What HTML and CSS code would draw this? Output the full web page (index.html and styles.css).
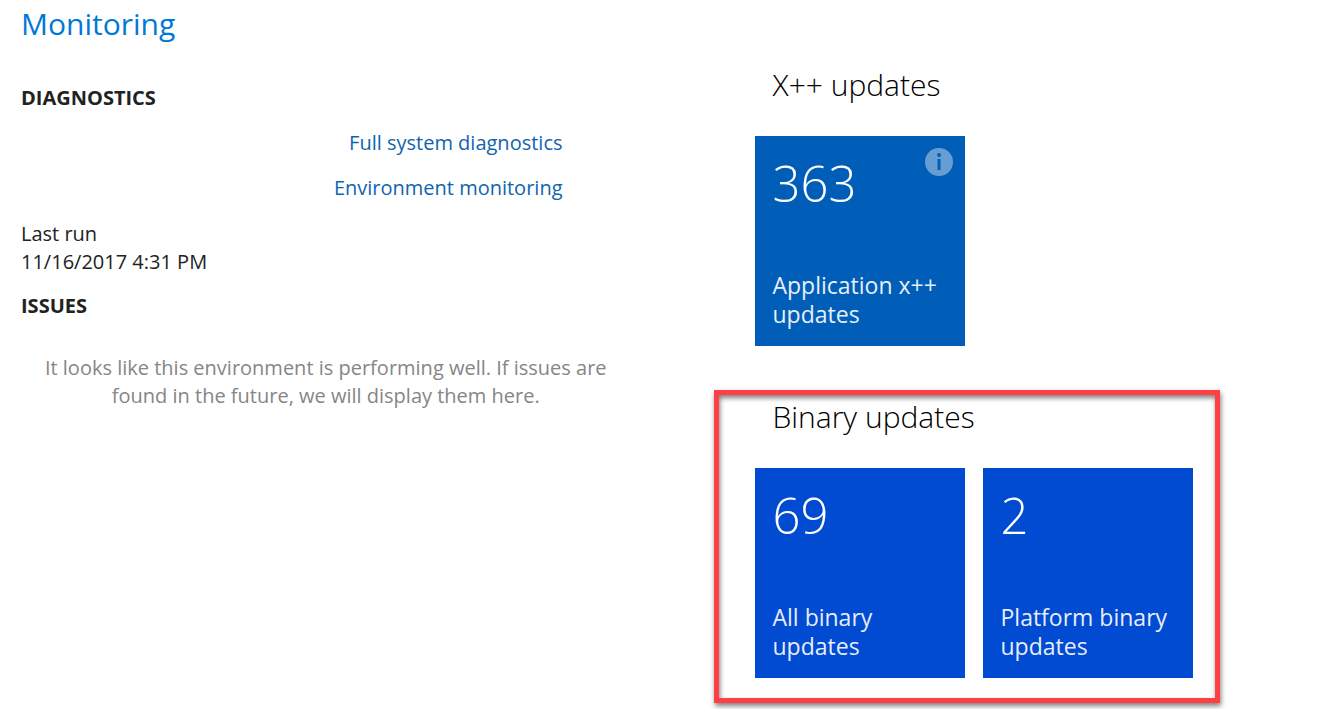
FILE: index.html
```html
<!DOCTYPE html>
<html lang="en">
<head>
<meta charset="utf-8">
<meta name="viewport" content="width=device-width, initial-scale=1">
<title>Monitoring</title>
<link rel="stylesheet" href="styles.css">
</head>
<body>
<main class="page">
  <section class="monitoring">
    <h1 class="page-title">Monitoring</h1>
    <h2 class="label">DIAGNOSTICS</h2>
    <nav class="links">
      <a href="#diagnostics">Full system diagnostics</a>
      <a href="#monitoring">Environment monitoring</a>
    </nav>
    <p class="last-run">Last run<br>11/16/2017 4:31 PM</p>
    <h2 class="label">ISSUES</h2>
    <p class="empty">It looks like this environment is performing well. If issues are found in the future, we will display them here.</p>
  </section>
  <div class="updates">
    <section class="group">
      <h2 class="group-title">X++ updates</h2>
      <div class="tiles">
        <a class="tile" href="#application">
          <span class="count">363</span>
          <span class="caption">Application x++ updates</span>
          <svg class="info" viewBox="0 0 28 28" role="img" aria-label="Information">
            <circle class="info-disc" cx="14" cy="14" r="14"/>
            <circle class="info-mark" cx="14" cy="7" r="2"/>
            <rect class="info-mark" x="12.5" y="11" width="3" height="11"/>
          </svg>
        </a>
      </div>
    </section>
    <section class="group highlighted">
      <h2 class="group-title">Binary updates</h2>
      <div class="tiles">
        <a class="tile binary" href="#all-binary">
          <span class="count">69</span>
          <span class="caption">All binary updates</span>
        </a>
        <a class="tile binary" href="#platform-binary">
          <span class="count">2</span>
          <span class="caption">Platform binary updates</span>
        </a>
      </div>
    </section>
  </div>
</main>
</body>
</html>
```
FILE: styles.css
```css
* { box-sizing: border-box; }

body {
  margin: 0;
  background: #fff;
  color: #222;
  font: 20px/28px "Open Sans", "Noto Sans", sans-serif;
}

h1, h2, p { margin: 0; }

a { text-decoration: none; }

.page {
  display: grid;
  grid-template-columns: 1fr 1fr;
  column-gap: 87px;
  min-height: 100vh;
  padding-left: 21px;
}

.page-title {
  padding-top: 4px;
  color: #0078d7;
  font-size: 30px;
  font-weight: 400;
  line-height: 40px;
}

.label {
  font-size: 20px;
  font-weight: 700;
  line-height: 28px;
}

.page-title + .label { margin-top: 40px; }

.links {
  display: flex;
  flex-direction: column;
  align-items: flex-end;
  gap: 17px;
  margin: 17px 64px 18px 0;
}

.links a { color: #1064ae; }

.last-run { margin-bottom: 16px; }

.empty {
  margin-top: 34px;
  padding: 0 18px 0 22px;
  color: #868686;
  text-align: center;
}

.updates {
  display: flex;
  flex-direction: column;
  align-items: flex-start;
  gap: 44px;
  padding-top: 63px;
}

.group { padding-left: 41px; }

.highlighted {
  padding: 0 22px 20px 36px;
  border: 5px solid #ff4043;
  box-shadow: 1px 3px 5px rgb(0 0 0 / 50%), inset 1px 3px 5px rgb(0 0 0 / 50%);
}

.group-title {
  padding-left: 18px;
  color: #000;
  font-size: 30px;
  font-weight: 350;
  line-height: 44px;
}

.tiles {
  display: flex;
  gap: 18px;
  margin-top: 29px;
}

.tile {
  position: relative;
  display: flex;
  flex-direction: column;
  justify-content: space-between;
  width: 210px;
  min-height: 210px;
  padding: 14px 18px 17px;
  background: #005eb8;
  color: #fff;
}

.binary { background: #004bd1; }

.count {
  font-size: 49px;
  font-weight: 350;
  line-height: 66px;
}

.caption {
  font-size: 23px;
  line-height: 29px;
  opacity: 0.9;
}

.info {
  position: absolute;
  top: 12px;
  right: 12px;
  width: 28px;
  height: 28px;
}

.info-disc { fill: #669ed4; }
.info-mark { fill: #005eb8; }
```
